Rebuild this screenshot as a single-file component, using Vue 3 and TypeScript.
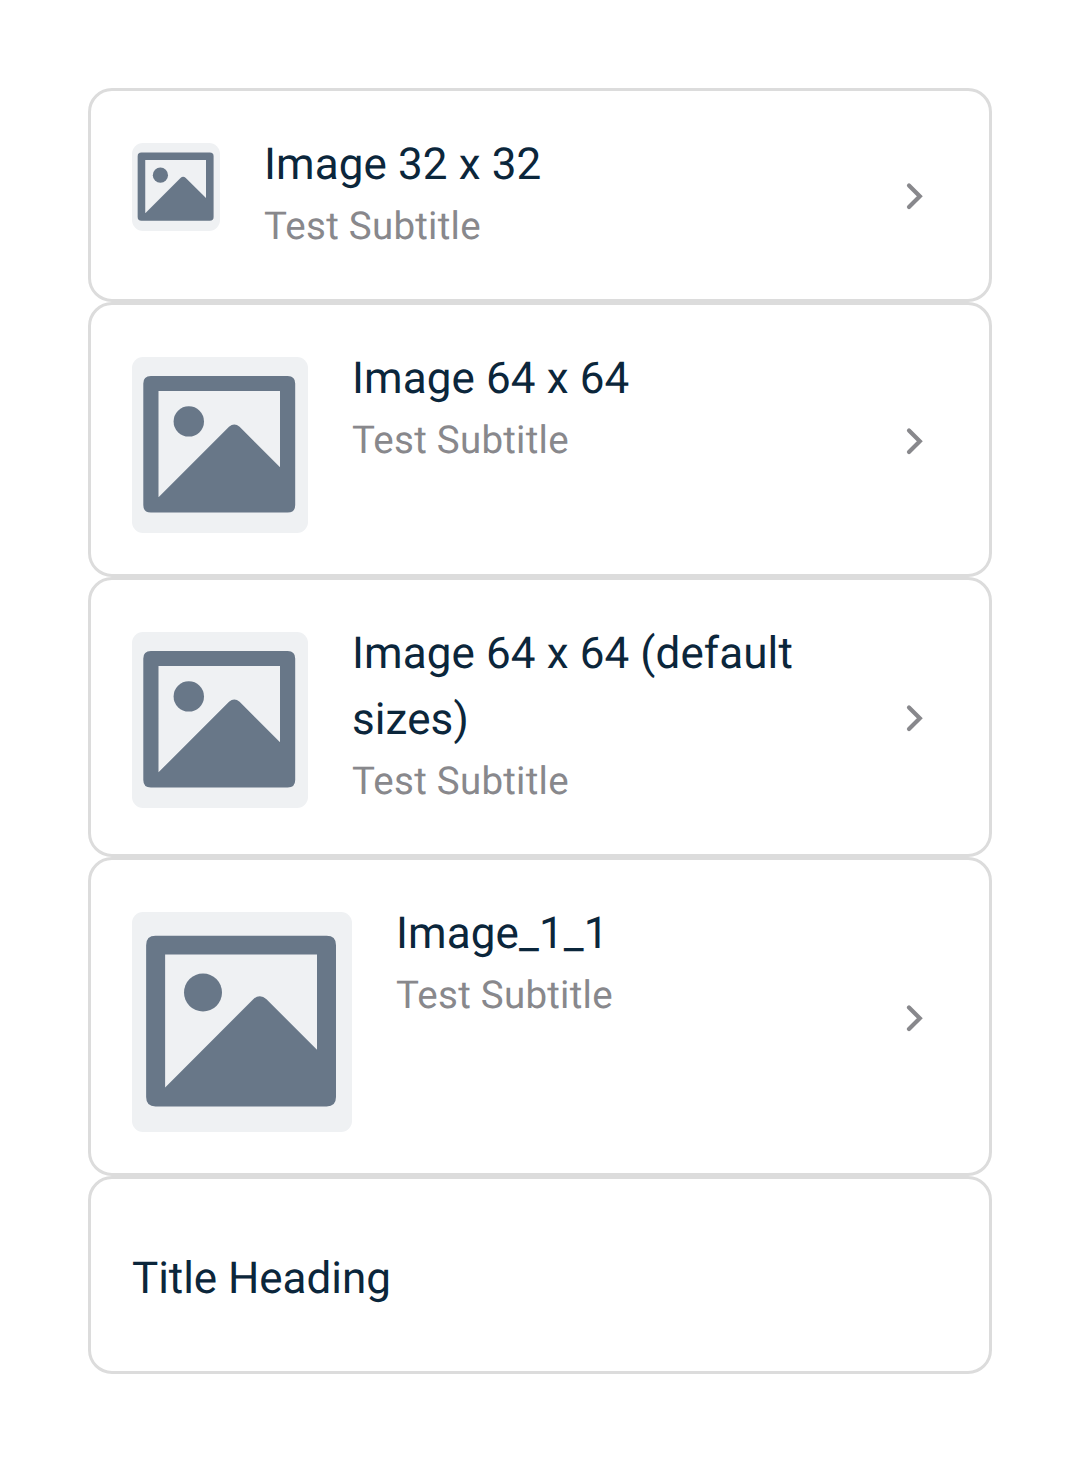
<script setup lang="ts">
interface Item {
  title: string
  subtitle?: string
  size: number
  height: number
}

const items: Item[] = [
  { title: 'Image 32 x 32', subtitle: 'Test Subtitle', size: 88, height: 214 },
  { title: 'Image 64 x 64', subtitle: 'Test Subtitle', size: 176, height: 275 },
  { title: 'Image 64 x 64 (default sizes)', subtitle: 'Test Subtitle', size: 176, height: 280 },
  { title: 'Image_1_1', subtitle: 'Test Subtitle', size: 220, height: 319 },
  { title: 'Title Heading', size: 0, height: 198 },
]
</script>

<template>
  <main class="list">
    <section v-for="item in items" :key="item.title" class="card" :class="{ heading: !item.size }" :style="{ height: item.height + 'px' }">
      <svg v-if="item.size" class="thumb" :width="item.size" :height="item.size" viewBox="0 0 176 176">
        <rect width="176" height="176" fill="#eff1f3" />
        <path fill="#687788" fill-rule="evenodd" d="M18.800 19H155.700Q163.200 19 163.200 26.500V148Q163.200 155.500 155.700 155.500H18.800Q11.300 155.500 11.300 148V26.500Q11.300 19 18.800 19ZM26.500 34V140.300L97 69.800Q102.300 65 107.600 69.800L148 110.200V34Z" />
        <circle cx="56.800" cy="64.400" r="15.200" fill="#687788" />
      </svg>
      <div class="text">
        <div class="title">{{ item.title }}</div>
        <div v-if="item.subtitle" class="subtitle">{{ item.subtitle }}</div>
      </div>
      <svg v-if="item.size" class="chevron" width="20" height="30" viewBox="0 0 20 30">
        <path d="M6 4.500L16.800 15.300L6 26.100" fill="none" stroke="#88888c" stroke-width="4.200" stroke-linecap="round" stroke-linejoin="miter" />
      </svg>
    </section>
  </main>
</template>

<style>
body { background: #fff; }
</style>

<style scoped>
.list {
  box-sizing: border-box;
  width: 1080px;
  height: 1462px;
  padding: 88px;
  font-family: Roboto, sans-serif;
  text-rendering: geometricPrecision;
}
.card {
  box-sizing: border-box;
  display: flex;
  align-items: flex-start;
  border: 3px solid #dcdcdc;
  border-radius: 24px;
  padding: 52px 66px 0 41px;
}
.thumb {
  flex: none;
  border-radius: 11px;
  margin-right: 44px;
}
.text { flex: 1; }
.title {
  width: 470px;
  color: #0b263b;
  font-size: 44px;
  line-height: 66px;
  letter-spacing: 0.1px;
  margin-top: -12px;
}
.subtitle {
  color: #88888c;
  font-size: 38.5px;
  line-height: 60px;
  letter-spacing: 0.25px;
}
.chevron {
  flex: none;
  align-self: center;
  margin-bottom: 50px;
}
.heading { padding-top: 78px; }
.heading .title { letter-spacing: -0.05px; }
</style>
